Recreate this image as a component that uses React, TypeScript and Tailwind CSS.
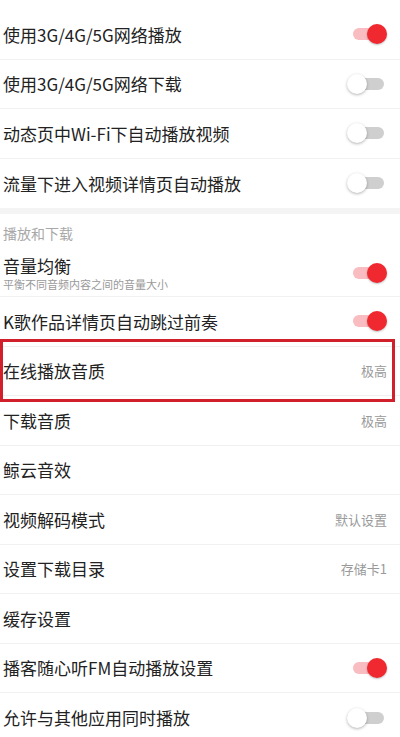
import React from 'react';

type Row = {
    title: string;
    sub?: string;
    value?: string;
    toggle?: boolean;
    highlight?: boolean;
};

const topRows: Row[] = [
    { title: '使用3G/4G/5G网络播放', toggle: true },
    { title: '使用3G/4G/5G网络下载', toggle: false },
    { title: '动态页中Wi-Fi下自动播放视频', toggle: false },
    { title: '流量下进入视频详情页自动播放', toggle: false },
];

const playRows: Row[] = [
    { title: 'K歌作品详情页自动跳过前奏', toggle: true },
    { title: '在线播放音质', value: '极高', highlight: true },
    { title: '下载音质', value: '极高' },
    { title: '鲸云音效' },
    { title: '视频解码模式', value: '默认设置' },
    { title: '设置下载目录', value: '存储卡1' },
    { title: '缓存设置' },
    { title: '播客随心听FM自动播放设置', toggle: true },
    { title: '允许与其他应用同时播放', toggle: false },
];

function Toggle({ on }: { on: boolean }) {
    return (
        <div className="relative w-[40px] h-[20px] shrink-0">
            <div
                className={
                    on
                        ? 'absolute left-[6px] right-[3px] top-[4px] h-[12px] rounded-full bg-[#f9bcc0]'
                        : 'absolute left-[6px] right-[3px] top-[4px] h-[12px] rounded-full bg-[#cfcfcf]'
                }
            />
            {on ? (
                <div className="absolute right-0 top-0 w-[20px] h-[20px] rounded-full bg-[#f0282f] shadow-[0_1px_2px_rgba(0,0,0,0.25)]" />
            ) : (
                <div className="absolute left-0 top-0 w-[20px] h-[20px] rounded-full bg-white shadow-[0_1px_3px_rgba(0,0,0,0.3)]" />
            )}
        </div>
    );
}

function SettingRow({ row, last }: { row: Row; last?: boolean }) {
    return (
        <div
            className={
                'relative flex items-center justify-between h-[49.5px] pl-[3px] pr-[13px] ' +
                (last ? '' : 'border-b border-[#f1f1f1]')
            }
        >
            <span className="text-[17px] text-[#222] leading-none">{row.title}</span>
            {row.toggle !== undefined && <Toggle on={row.toggle} />}
            {row.value && (
                <span className="text-[13px] text-[#9a9a9a] leading-none">{row.value}</span>
            )}
            {row.highlight && (
                <div className="absolute -top-[8px] -bottom-[7px] left-0 right-[5px] border-[3px] border-[#d1202b] pointer-events-none" />
            )}
        </div>
    );
}

export default function App() {
    return (
        <div
            className="w-[400px] h-[737px] overflow-hidden bg-white"
            style={{ fontFamily: '"Noto Sans CJK SC", "Noto Sans", sans-serif' }}
        >
            <div className="pt-[10px]">
                {topRows.map((r, i) => (
                    <SettingRow key={r.title} row={r} last={i === topRows.length - 1} />
                ))}
            </div>

            {/* section gap */}
            <div className="h-[6px] bg-[#f4f4f4]" />

            <div className="h-[36px] flex items-center pl-[3px] pt-[2px]">
                <span className="text-[14px] text-[#a8a8a8] leading-none">播放和下载</span>
            </div>

            <div className="flex items-center justify-between h-[47px] pl-[3px] pr-[13px] border-b border-[#f1f1f1]">
                <div className="flex flex-col gap-[5px]">
                    <span className="text-[17px] text-[#222] leading-none">音量均衡</span>
                    <span className="text-[11px] text-[#9a9a9a] leading-none">平衡不同音频内容之间的音量大小</span>
                </div>
                <Toggle on={true} />
            </div>

            {playRows.map((r, i) => (
                <SettingRow key={r.title} row={r} last={i === playRows.length - 1} />
            ))}
        </div>
    );
}
